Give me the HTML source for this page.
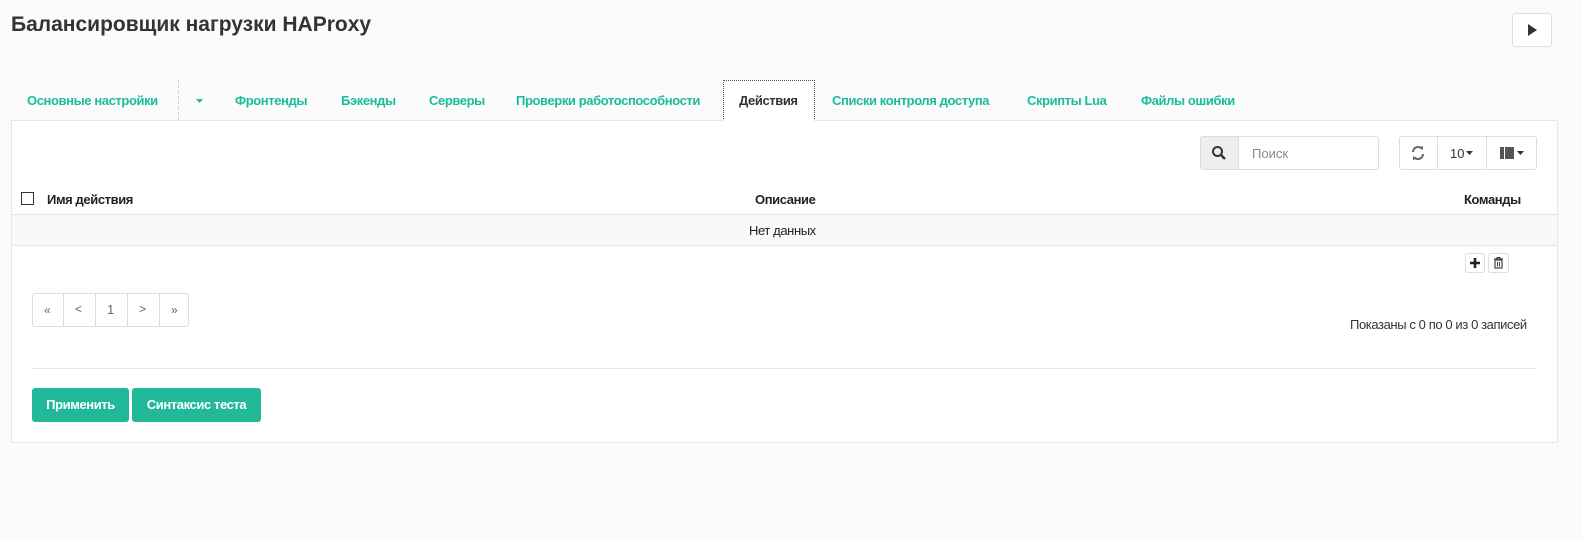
<!DOCTYPE html>
<html><head><meta charset="utf-8"><style>
*{box-sizing:border-box;margin:0;padding:0}
body{width:1582px;height:541px;background:#fbfbfb;font-family:"Liberation Sans",sans-serif;position:relative;overflow:hidden;color:#222}
.a{position:absolute;white-space:nowrap}
.t{font-weight:bold;font-size:13px;color:#1abc9c;letter-spacing:-0.4px;top:93px}
.b{font-weight:bold;font-size:13px;letter-spacing:-0.4px}
.box{position:absolute;border:1px solid #ddd;border-radius:3px;background:#fff}
</style></head><body>
<div class="a" style="left:11px;top:13px;font-size:21px;font-weight:bold;color:#333;letter-spacing:0px">Балансировщик нагрузки HAProxy</div>
<div class="box" style="left:1512px;top:13px;width:40px;height:34px"><svg width="40" height="34" style="position:absolute;left:-1px;top:-1px"><path d="M16 11 L25 17 L16 23Z" fill="#333"/></svg></div>

<div class="a" style="left:178px;top:80px;height:40px;border-left:1px dashed #ccc"></div>
<div class="a" style="left:723px;top:80px;width:92px;height:41px;border:1px dotted #555;border-bottom:none;background:#fff"></div>
<div class="a t" style="left:27px">Основные настройки</div>
<svg class="a" style="left:195px;top:98px" width="10" height="6"><path d="M1 1 L8 1 L4.5 5Z" fill="#1abc9c"/></svg>
<div class="a t" style="left:235px">Фронтенды</div>
<div class="a t" style="left:341px">Бэкенды</div>
<div class="a t" style="left:429px">Серверы</div>
<div class="a t" style="left:516px">Проверки работоспособности</div>
<div class="a t" style="left:739px;color:#333">Действия</div>
<div class="a t" style="left:832px">Списки контроля доступа</div>
<div class="a t" style="left:1027px">Скрипты Lua</div>
<div class="a t" style="left:1141px">Файлы ошибки</div>

<div class="a" style="left:11px;top:120px;width:1547px;height:323px;background:#fff;border:1px solid #e6e6e6"></div>
<div class="a" style="left:723px;top:119px;width:91px;height:3px;background:#fff"></div>

<div class="box" style="left:1200px;top:136px;width:179px;height:34px"></div>
<div class="a" style="left:1201px;top:137px;width:38px;height:32px;background:#eee;border-right:1px solid #ddd"></div>
<svg class="a" style="left:1211px;top:145px" width="16" height="16"><circle cx="6.5" cy="6.5" r="4.5" stroke="#333" stroke-width="2" fill="none"/><path d="M10 10 L14 14" stroke="#333" stroke-width="2.4"/></svg>
<div class="a" style="left:1252px;top:146px;font-size:13px;color:#888">Поиск</div>

<div class="box" style="left:1399px;top:136px;width:138px;height:34px"></div>
<div class="a" style="left:1437px;top:137px;height:32px;border-left:1px solid #ddd"></div>
<div class="a" style="left:1486px;top:137px;height:32px;border-left:1px solid #ddd"></div>
<svg class="a" style="left:1410px;top:145px" width="16" height="16"><path d="M3 7 A5 5 0 0 1 12 4 M13 9 A5 5 0 0 1 4 12" stroke="#666" stroke-width="2" fill="none"/><path d="M10 2 L13 5 L13 1Z M6 14 L3 11 L3 15Z" fill="#666"/></svg>
<div class="a" style="left:1450px;top:146px;font-size:13px;color:#333">10</div>
<svg class="a" style="left:1466px;top:151px" width="8" height="5"><path d="M0 0 L7 0 L3.5 4Z" fill="#333"/></svg>
<svg class="a" style="left:1500px;top:147px" width="26" height="12"><rect x="0" y="0" width="4" height="12" fill="#555"/><rect x="5" y="0" width="9" height="12" fill="#555"/><path d="M17 4 L24 4 L20.5 8Z" fill="#333"/></svg>

<div class="a" style="left:21px;top:192px;width:13px;height:13px;border:1.5px solid #333;background:#fff"></div>
<div class="a b" style="left:47px;top:192px">Имя действия</div>
<div class="a b" style="left:755px;top:192px">Описание</div>
<div class="a b" style="left:1464px;top:192px">Команды</div>
<div class="a" style="left:12px;top:214px;width:1545px;height:32px;background:#f9f9f9;border-top:1px solid #e6e6e6;border-bottom:1px solid #e6e6e6"></div>
<div class="a" style="left:749px;top:223px;font-size:13px;letter-spacing:-0.4px">Нет данных</div>

<div class="box" style="left:1465px;top:253px;width:20px;height:20px"></div>
<svg class="a" style="left:1469px;top:257px" width="12" height="12"><path d="M6 1 V11 M1 6 H11" stroke="#222" stroke-width="2.6"/></svg>
<div class="box" style="left:1488px;top:253px;width:21px;height:20px"></div>
<svg class="a" style="left:1493px;top:257px" width="12" height="12"><path d="M1 2 H10 M4 2 V0.5 H7 V2" stroke="#444" stroke-width="1.2" fill="none"/><rect x="2" y="3" width="7" height="8" fill="none" stroke="#444" stroke-width="1.2"/><path d="M4.5 5 V9.5 M6.5 5 V9.5" stroke="#444"/></svg>

<div class="box" style="left:32px;top:293px;width:157px;height:34px"></div>
<div class="a" style="left:63px;top:294px;height:32px;border-left:1px solid #ddd"></div>
<div class="a" style="left:95px;top:294px;height:32px;border-left:1px solid #ddd"></div>
<div class="a" style="left:127px;top:294px;height:32px;border-left:1px solid #ddd"></div>
<div class="a" style="left:159px;top:294px;height:32px;border-left:1px solid #ddd"></div>
<div class="a" style="left:44px;top:303px;font-size:12px;color:#666">«</div>
<div class="a" style="left:75px;top:302px;font-size:12px;color:#666">&lt;</div>
<div class="a" style="left:107px;top:302px;font-size:13px;color:#666">1</div>
<div class="a" style="left:139px;top:302px;font-size:12px;color:#666">&gt;</div>
<div class="a" style="left:171px;top:303px;font-size:12px;color:#666">»</div>
<div class="a" style="left:1350px;top:317px;font-size:13px;letter-spacing:-0.4px;color:#333">Показаны с 0 по 0 из 0 записей</div>

<div class="a" style="left:32px;top:368px;width:1504px;border-top:1px solid #e6e6e6"></div>
<div class="a b" style="left:32px;top:388px;width:97px;height:34px;background:#22b99a;border-radius:3px;color:#fff;text-align:center;line-height:34px">Применить</div>
<div class="a b" style="left:132px;top:388px;width:129px;height:34px;background:#22b99a;border-radius:3px;color:#fff;text-align:center;line-height:34px">Синтаксис теста</div>
</body></html>
